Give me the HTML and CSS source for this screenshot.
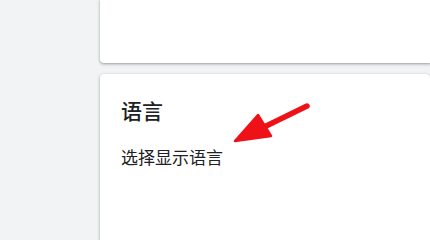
FILE: index.html
```html
<!DOCTYPE html>
<html lang="zh-CN">
<head>
<meta charset="utf-8">
<link rel="stylesheet" href="styles.css">
</head>
<body>
<div class="page">
  <aside class="side"></aside>
  <main class="main">
    <section class="card card-top"></section>
    <section class="card card-lang">
      <h2 class="title">语言</h2>
      <p class="desc">选择显示语言</p>
      <svg class="arrow" width="90" height="50" viewBox="0 0 90 50" aria-hidden="true">
        <line x1="82" y1="12" x2="35" y2="35" stroke="#ee1218" stroke-width="5.5" stroke-linecap="round"/>
        <polygon points="10,47 33,21 46,42" fill="#ee1218" stroke="#ee1218" stroke-width="2.5" stroke-linejoin="round"/>
      </svg>
    </section>
  </main>
</div>
</body>
</html>
```

FILE: styles.css
```css
html, body {
  margin: 0;
  padding: 0;
  height: 100%;
  background: #f1f3f4;
  font-family: "Noto Sans CJK SC", "Noto Sans", sans-serif;
  color: #202124;
  overflow: hidden;
}
.page {
  display: flex;
  height: 100vh;
}
.side {
  width: 100px;
  flex: none;
}
.main {
  flex: 1;
  display: flex;
  flex-direction: column;
  gap: 11px;
}
.card {
  background: #fff;
  border-radius: 4px;
  box-shadow: 0 1px 2px rgba(60, 64, 67, 0.3), 0 1px 3px 1px rgba(60, 64, 67, 0.15);
}
.card-top {
  height: 63px;
  flex: none;
  border-top-left-radius: 0;
  border-top-right-radius: 0;
  border-bottom-right-radius: 0;
}
.card-lang {
  position: relative;
  flex: 1;
  margin-bottom: -10px;
  padding: 22px 21px 0;
  border-bottom-right-radius: 0;
  border-bottom-left-radius: 0;
}
.title {
  margin: 0;
  font-size: 21px;
  font-weight: 500;
  line-height: 28px;
  color: #202124;
}
.desc {
  margin: 21px 0 0;
  font-size: 17px;
  line-height: 24px;
  color: #202124;
}
.arrow {
  position: absolute;
  left: 125px;
  top: 20px;
}
```
